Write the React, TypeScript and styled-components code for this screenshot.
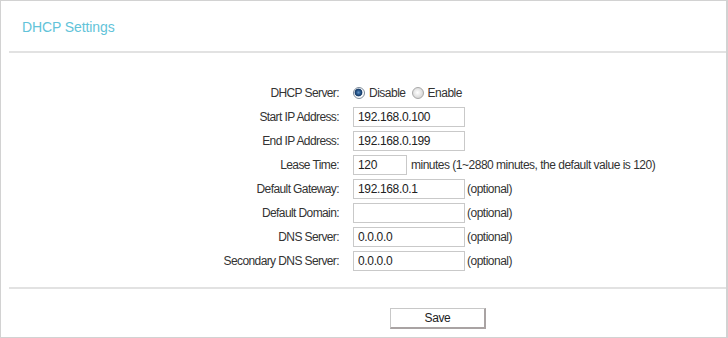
import React from 'react';
import styled, { createGlobalStyle } from 'styled-components';

const GlobalStyle = createGlobalStyle`
  html, body { margin: 0; padding: 0; background: #fff; }
  body { font-family: "Liberation Sans", Arial, sans-serif; }
`;

const Panel = styled.div`
  box-sizing: border-box;
  width: 728px;
  height: 338px;
  border: 1px solid #d2d2d2;
  border-right-width: 2px;
  background: #fff;
  display: flex;
  flex-direction: column;
`;

const Header = styled.div`
  height: 50px;
  box-sizing: border-box;
  padding: 17px 0 0 21px;
  font-size: 14px;
  line-height: 18px;
  color: #62c3d9;
  letter-spacing: -0.1px;
`;

const Divider = styled.div`
  margin-left: 8px;
  height: 2px;
  background: #e2e2e2;
`;

const Form = styled.div`
  display: grid;
  grid-template-columns: 338px auto;
  column-gap: 14px;
  row-gap: 4px;
  padding: 30px 0 16px;
  font-size: 12px;
  color: #333;
  letter-spacing: -0.5px;
`;

const Label = styled.div`
  height: 20px;
  line-height: 20px;
  text-align: right;
  letter-spacing: -0.6px;
`;

const Field = styled.div`
  display: flex;
  align-items: center;
  gap: ${(p: { $gap?: number }) => p.$gap ?? 2}px;
  height: 20px;
`;

const TextBox = styled.input<{ $w?: number }>`
  box-sizing: border-box;
  width: ${(p) => p.$w ?? 112}px;
  height: 20px;
  margin: 0;
  padding: 0 4px;
  border: 1px solid #c9c9c9;
  background: #fff;
  font-family: "Liberation Sans", Arial, sans-serif;
  font-size: 12px;
  letter-spacing: -0.35px;
  color: #222;
  outline: none;
`;

const Radio = styled.span<{ $on?: boolean }>`
  box-sizing: border-box;
  width: 12px;
  height: 12px;
  border-radius: 50%;
  border: 1px solid ${(p) => (p.$on ? '#7d8a98' : '#a8a8a8')};
  background: ${(p) =>
    p.$on
      ? 'radial-gradient(circle at 45% 45%, #5f93c6 0, #1f4c80 2.5px, #163a66 3.5px, #e8eef4 4.2px, #fff 5px)'
      : 'radial-gradient(circle at 45% 45%, #fff 0, #e9e9e9 3px, #d4d4d4 6px)'};
  flex: none;
`;

const Choice = styled.span`
  margin-right: 2px;
`;

const Note = styled.span`
  white-space: nowrap;
`;

const Actions = styled.div`
  display: flex;
  padding: 19px 0 0 389px;
`;

const SaveButton = styled.button`
  box-sizing: border-box;
  width: 96px;
  height: 21px;
  padding: 0;
  background: #fff;
  border: 1px solid #c8c8c8;
  border-right: 2px solid #a9a3a3;
  border-bottom: 2px solid #a9a3a3;
  font-family: "Liberation Sans", Arial, sans-serif;
  font-size: 12px;
  letter-spacing: -0.4px;
  color: #222;
`;

type Row = { label: string; value: string; width?: number; note?: string; gap?: number };

const rows: Row[] = [
  { label: 'Start IP Address:', value: '192.168.0.100' },
  { label: 'End IP Address:', value: '192.168.0.199' },
  { label: 'Lease Time:', value: '120', width: 54, note: 'minutes (1~2880 minutes, the default value is 120)', gap: 4 },
  { label: 'Default Gateway:', value: '192.168.0.1', note: '(optional)' },
  { label: 'Default Domain:', value: '', note: '(optional)' },
  { label: 'DNS Server:', value: '0.0.0.0', note: '(optional)' },
  { label: 'Secondary DNS Server:', value: '0.0.0.0', note: '(optional)' },
];

export default function App() {
  return (
    <>
      <GlobalStyle />
      <Panel>
        <Header>DHCP Settings</Header>
        <Divider />
        <Form>
          <Label>DHCP Server:</Label>
          <Field $gap={4}>
            <Radio $on />
            <Choice>Disable</Choice>
            <Radio />
            <Choice>Enable</Choice>
          </Field>
          {rows.map((r) => (
            <React.Fragment key={r.label}>
              <Label>{r.label}</Label>
              <Field $gap={r.gap}>
                <TextBox $w={r.width} value={r.value} readOnly />
                {r.note && <Note>{r.note}</Note>}
              </Field>
            </React.Fragment>
          ))}
        </Form>
        <Divider />
        <Actions>
          <SaveButton>Save</SaveButton>
        </Actions>
      </Panel>
    </>
  );
}
